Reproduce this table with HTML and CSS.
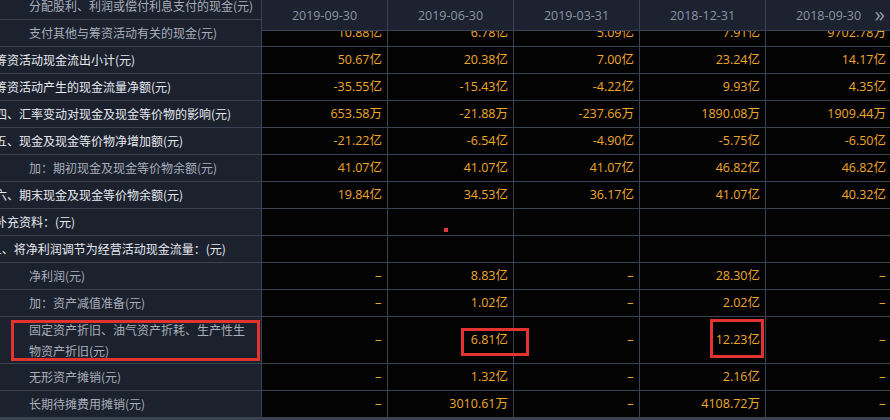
FILE: index.html
```html
<!DOCTYPE html>
<html lang="zh-CN">
<head>
<meta charset="utf-8">
<title>现金流量表</title>
<link rel="stylesheet" href="styles.css">
</head>
<body>
<div class="view">
  <div class="grid">
    <div class="lbl sub">分配股利、利润或偿付利息支付的现金(元)</div>
    <div class="v"></div><div class="v"></div><div class="v"></div><div class="v"></div><div class="v"></div>

    <div class="lbl sub">支付其他与筹资活动有关的现金(元)</div>
    <div class="v">10.88亿</div><div class="v">6.78亿</div><div class="v">5.09亿</div><div class="v">7.91亿</div><div class="v">9702.78万</div>

    <div class="lbl">筹资活动现金流出小计(元)</div>
    <div class="v">50.67亿</div><div class="v">20.38亿</div><div class="v">7.00亿</div><div class="v">23.24亿</div><div class="v">14.17亿</div>

    <div class="lbl">筹资活动产生的现金流量净额(元)</div>
    <div class="v">-35.55亿</div><div class="v">-15.43亿</div><div class="v">-4.22亿</div><div class="v">9.93亿</div><div class="v">4.35亿</div>

    <div class="lbl">四、汇率变动对现金及现金等价物的影响(元)</div>
    <div class="v">653.58万</div><div class="v">-21.88万</div><div class="v">-237.66万</div><div class="v">1890.08万</div><div class="v">1909.44万</div>

    <div class="lbl">五、现金及现金等价物净增加额(元)</div>
    <div class="v">-21.22亿</div><div class="v">-6.54亿</div><div class="v">-4.90亿</div><div class="v">-5.75亿</div><div class="v">-6.50亿</div>

    <div class="lbl sub">加：期初现金及现金等价物余额(元)</div>
    <div class="v">41.07亿</div><div class="v">41.07亿</div><div class="v">41.07亿</div><div class="v">46.82亿</div><div class="v">46.82亿</div>

    <div class="lbl">六、期末现金及现金等价物余额(元)</div>
    <div class="v">19.84亿</div><div class="v">34.53亿</div><div class="v">36.17亿</div><div class="v">41.07亿</div><div class="v">40.32亿</div>

    <div class="lbl">补充资料：(元)</div>
    <div class="v"></div><div class="v"></div><div class="v"></div><div class="v"></div><div class="v"></div>

    <div class="lbl">1、将净利润调节为经营活动现金流量：(元)</div>
    <div class="v"></div><div class="v"></div><div class="v"></div><div class="v"></div><div class="v"></div>

    <div class="lbl sub">净利润(元)</div>
    <div class="v dash">--</div><div class="v">8.83亿</div><div class="v dash">--</div><div class="v">28.30亿</div><div class="v dash">--</div>

    <div class="lbl sub">加：资产减值准备(元)</div>
    <div class="v dash">--</div><div class="v">1.02亿</div><div class="v dash">--</div><div class="v">2.02亿</div><div class="v dash">--</div>

    <div class="lbl sub wrap">固定资产折旧、油气资产折耗、生产性生物资产折旧(元)</div>
    <div class="v dash">--</div><div class="v">6.81亿</div><div class="v dash">--</div><div class="v">12.23亿</div><div class="v dash">--</div>

    <div class="lbl sub">无形资产摊销(元)</div>
    <div class="v dash">--</div><div class="v">1.32亿</div><div class="v dash">--</div><div class="v">2.16亿</div><div class="v dash">--</div>

    <div class="lbl sub">长期待摊费用摊销(元)</div>
    <div class="v dash">--</div><div class="v">3010.61万</div><div class="v dash">--</div><div class="v">4108.72万</div><div class="v dash">--</div>
  </div>

  <div class="head">
    <div class="hc">2019-09-30</div>
    <div class="hc">2019-06-30</div>
    <div class="hc">2019-03-31</div>
    <div class="hc">2018-12-31</div>
    <div class="hc last">2018-09-30<span class="more">»</span></div>
  </div>

  <div class="mark mark-label"></div>
  <div class="mark mark-v1"></div>
  <div class="mark mark-v2"></div>
  <div class="dot"></div>
</div>
</body>
</html>
```

FILE: styles.css
```css
html, body {
  margin: 0;
  padding: 0;
  background: #030303;
}

.view {
  position: relative;
  width: 890px;
  height: 420px;
  overflow: hidden;
  background: #3a4353;
  font-family: "Open Sans", "Noto Sans CJK SC", sans-serif;
}

/* table scrolled: 13px to the left, 7px up */
.grid {
  display: grid;
  grid-template-columns: 274px repeat(5, 125px);
  grid-template-rows: repeat(12, 26px) 46px repeat(2, 26px);
  gap: 1px;
  margin-top: -7px;
  margin-left: -13px;
  background: #3a4353;
}

.lbl {
  background: #1b212d;
  color: #e6e9f0;
  font-family: "Noto Sans CJK SC", sans-serif;
  font-size: 12px;
  line-height: 26px;
  white-space: nowrap;
  overflow: hidden;
  padding-left: 8px;
}

.lbl.sub {
  color: #a8afbb;
  padding-left: 42px;
}

.lbl.wrap {
  white-space: normal;
  line-height: 21px;
  padding-top: 2px;
  padding-right: 12px;
}

.v {
  background: #030303;
  color: #efa72c;
  font-size: 12.5px;
  line-height: 26px;
  padding-right: 5px;
  white-space: nowrap;
  display: flex;
  align-items: center;
  justify-content: flex-end;
}

.v.dash {
  letter-spacing: -1.5px;
  padding-right: 7px;
}

.head {
  position: absolute;
  top: 0;
  left: 262px;
  display: grid;
  grid-template-columns: repeat(5, 125px);
  gap: 1px;
  padding-bottom: 1px;
  background: #3a4353;
}

.hc {
  position: relative;
  height: 30px;
  background: #1c2230;
  color: #8b94a6;
  font-size: 12.5px;
  display: flex;
  align-items: center;
  justify-content: center;
}

.more {
  position: absolute;
  right: 6px;
  top: 4px;
  font-size: 21px;
  line-height: 21px;
  color: #8f98aa;
}

.mark {
  position: absolute;
  border: 3px solid #e3332f;
  box-sizing: border-box;
}

.mark-label {
  left: 11px;
  top: 320px;
  width: 249px;
  height: 41px;
}

.mark-v1 {
  left: 461px;
  top: 328px;
  width: 68px;
  height: 28px;
}

.mark-v2 {
  left: 710px;
  top: 319px;
  width: 54px;
  height: 39px;
}

.dot {
  position: absolute;
  left: 444px;
  top: 228px;
  width: 4px;
  height: 4px;
  background: #e23a3a;
}
```
